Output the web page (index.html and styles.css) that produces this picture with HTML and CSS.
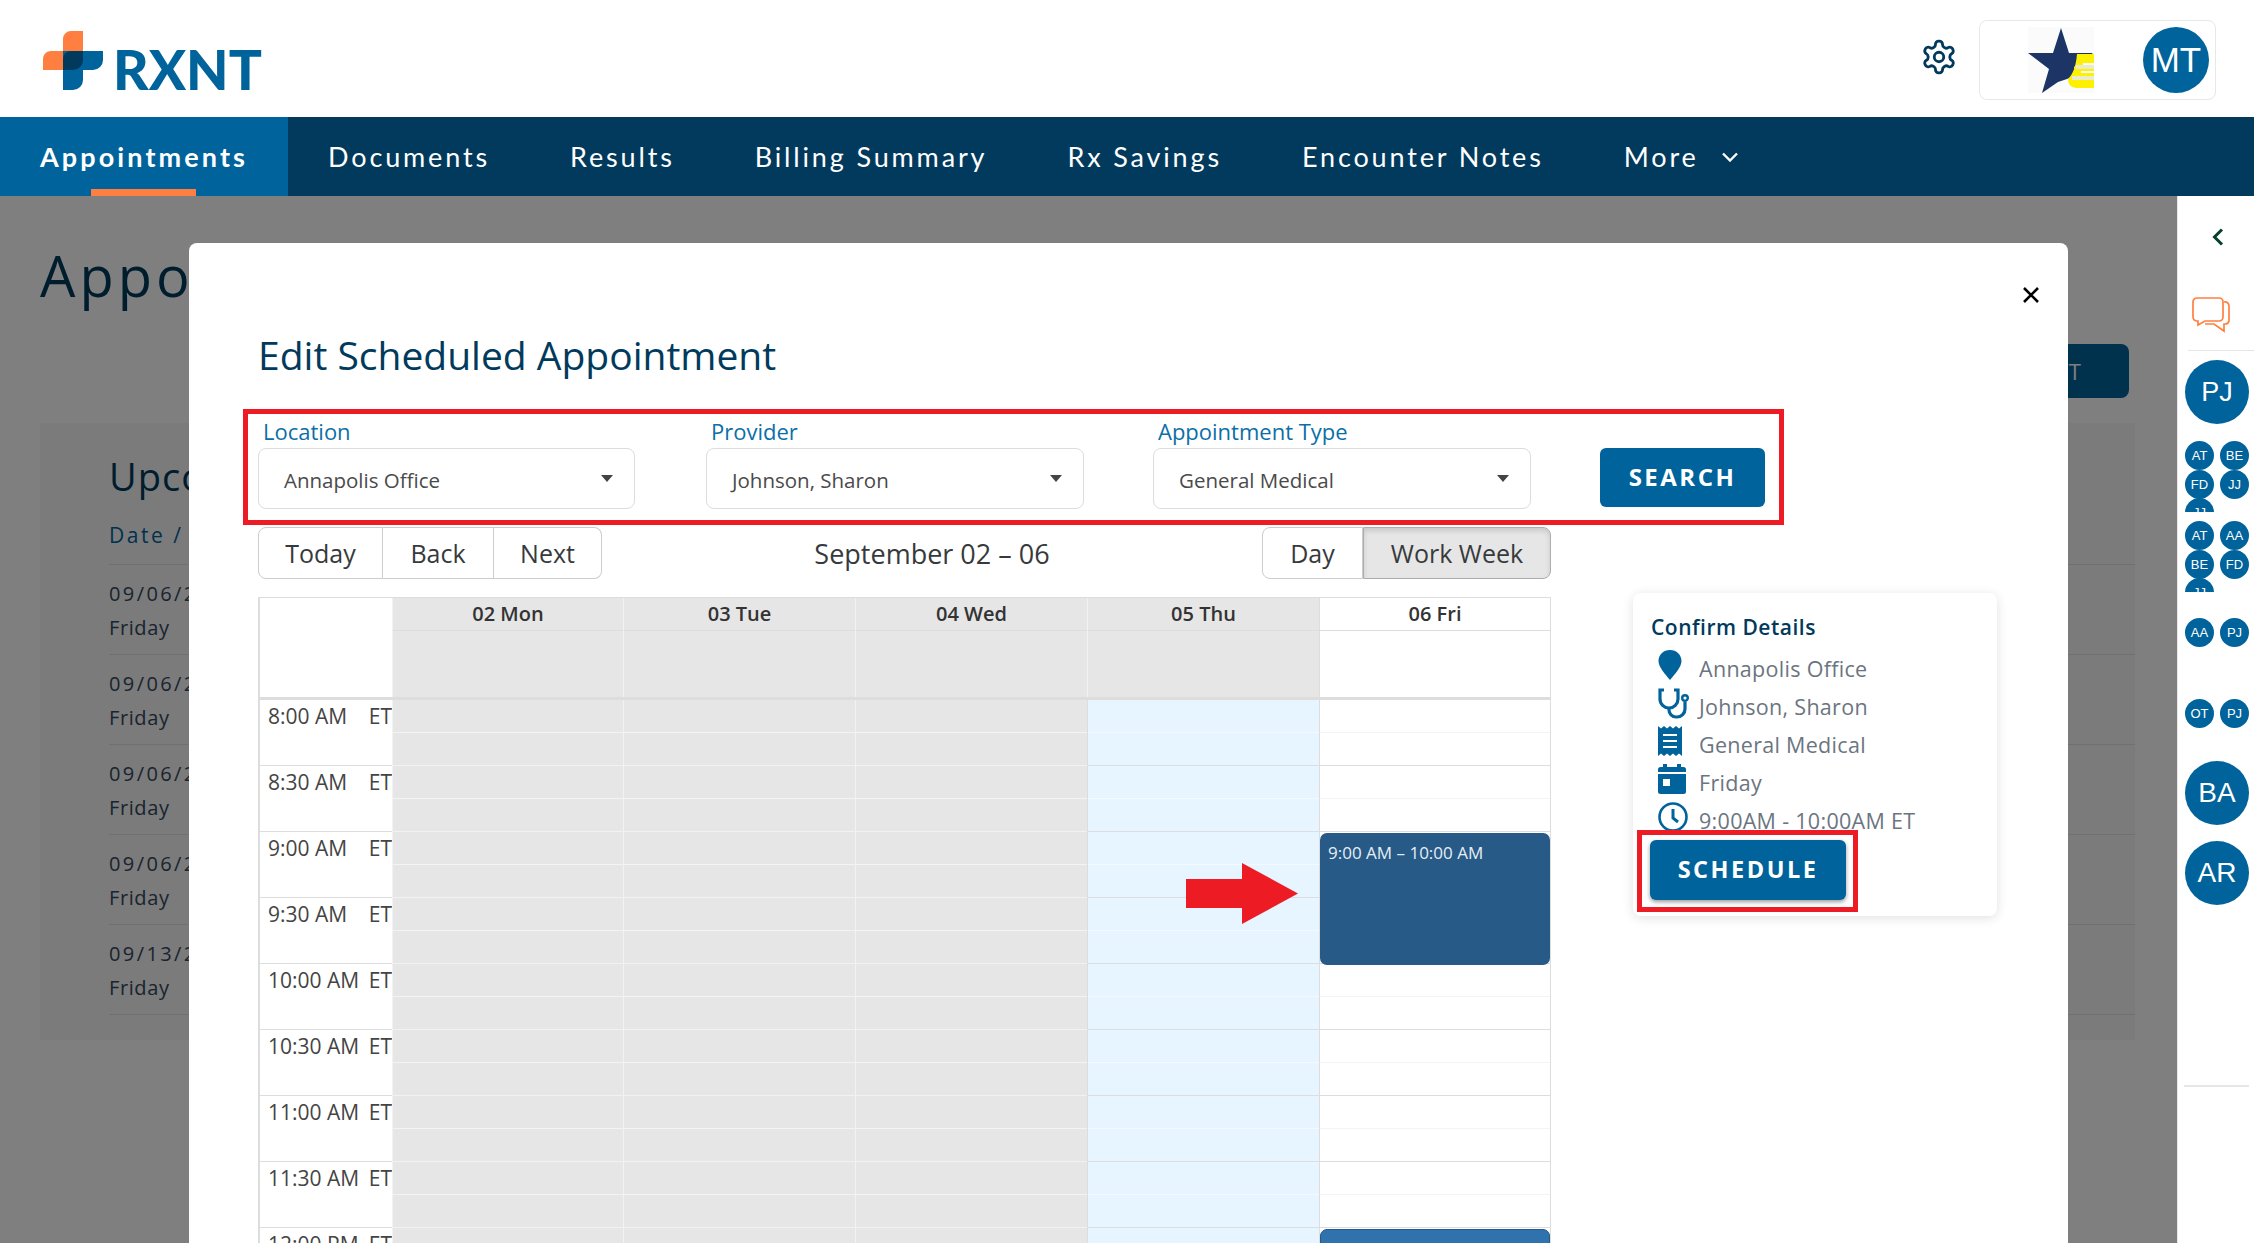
FILE: index.html
```html
<!DOCTYPE html>
<html lang="en">
<head>
    <meta charset="UTF-8">
    <meta name="viewport" content="width=device-width, initial-scale=1.0">
    <title>Edit Scheduled Appointment</title>
    <link rel="stylesheet" href="styles.css">
</head>
<body>

    <header class="topbar">
        <div class="logo">
            <svg class="logo-mark" width="60" height="59" viewBox="0 0 60 59">
                <path d="M28 0h12v29a10 10 0 0 1-10 10h-30v-11a8 8 0 0 1 8-8h12v-12a8 8 0 0 1 8-8z" fill="#ff7f41"/>
                <path d="M20 20h40v9a10 10 0 0 1-10 10h-10v10a10 10 0 0 1-10 10h-10z" fill="#00639b"/>
                <path d="M28 20h12v9a10 10 0 0 1-10 10h-10v-11a8 8 0 0 1 8-8z" fill="#013a5c"/>
            </svg>
            <span class="logo-text">RXNT</span>
        </div>
        <div class="topbar-right">
            <svg class="gear" width="38" height="38" viewBox="0 0 24 24" fill="none" stroke="#013a5c" stroke-width="1.800">
                <path d="M12.22 2h-.44a2 2 0 0 0-2 2v.18a2 2 0 0 1-1 1.73l-.43.25a2 2 0 0 1-2 0l-.15-.08a2 2 0 0 0-2.73.73l-.22.38a2 2 0 0 0 .73 2.73l.15.1a2 2 0 0 1 1 1.72v.51a2 2 0 0 1-1 1.74l-.15.09a2 2 0 0 0-.73 2.73l.22.38a2 2 0 0 0 2.73.73l.15-.08a2 2 0 0 1 2 0l.43.25a2 2 0 0 1 1 1.73V20a2 2 0 0 0 2 2h.44a2 2 0 0 0 2-2v-.18a2 2 0 0 1 1-1.73l.43-.25a2 2 0 0 1 2 0l.15.08a2 2 0 0 0 2.73-.73l.22-.39a2 2 0 0 0-.73-2.73l-.15-.08a2 2 0 0 1-1-1.74v-.5a2 2 0 0 1 1-1.74l.15-.09a2 2 0 0 0 .73-2.73l-.22-.38a2 2 0 0 0-2.73-.73l-.15.08a2 2 0 0 1-2 0l-.43-.25a2 2 0 0 1-1-1.73V4a2 2 0 0 0-2-2z"/>
                <circle cx="12" cy="12" r="3"/>
            </svg>
            <div class="account">
                <svg width="66" height="66" viewBox="0 0 66 66">
                    <rect width="66" height="66" fill="#fbfbfb"/>
                    <path d="M33 1l8 25h24l-19 14 2 8-9 4-9 3-16 11 7-24-21-16h25z" fill="#1c3566"/>
                    <path d="M49 27h17v9h-11v2h11v6h-13v2h13v15h-18a8 8 0 0 1-8-9c5-5 8-13 9-25z" fill="#fdf000"/>
                    <path d="M48 38h18v4h-18zM44 49h22v4h-22z" fill="#ecebc8"/>
                </svg>
                <span class="avatar avatar-mt">MT</span>
            </div>
        </div>
    </header>

    <nav class="mainnav">
        <a class="tab active">Appointments</a>
        <a class="tab">Documents</a>
        <a class="tab">Results</a>
        <a class="tab">Billing Summary</a>
        <a class="tab">Rx Savings</a>
        <a class="tab">Encounter Notes</a>
        <a class="tab">More
            <svg class="more-chevron" width="18" height="10" viewBox="0 0 18 10" fill="none" stroke="#fff" stroke-width="2.400"><path d="M2 1.500l7 7 7-7"/></svg>
        </a>
    </nav>

    <div class="workspace">
        <main class="page">
            <div class="page-head">
                <h1>Appointments</h1>
                <button class="new-btn">SCHEDULE APPOINTMENT</button>
            </div>
            <section class="upcoming">
                <h2>Upcoming Appointments</h2>
                <div class="upcoming-head">Date / Day</div>
                <div class="upcoming-row"><span class="date">09/06/2024</span><span>Friday</span></div>
                <div class="upcoming-row"><span class="date">09/06/2024</span><span>Friday</span></div>
                <div class="upcoming-row"><span class="date">09/06/2024</span><span>Friday</span></div>
                <div class="upcoming-row"><span class="date">09/06/2024</span><span>Friday</span></div>
                <div class="upcoming-row"><span class="date">09/13/2024</span><span>Friday</span></div>
            </section>

            <div class="overlay">
                <div class="modal">
                    <svg class="close" width="16" height="16" viewBox="0 0 16 16" stroke="#000" stroke-width="2.600"><path d="M1 1l14 14M15 1l-14 14"/></svg>
                    <h2 class="modal-title">Edit Scheduled Appointment</h2>

                    <div class="filters">
                        <div class="field loc">
                            <label>Location</label>
                            <div class="select">Annapolis Office<i class="caret"></i></div>
                        </div>
                        <div class="field prov">
                            <label>Provider</label>
                            <div class="select">Johnson, Sharon<i class="caret"></i></div>
                        </div>
                        <div class="field type">
                            <label>Appointment Type</label>
                            <div class="select">General Medical<i class="caret"></i></div>
                        </div>
                        <button class="search-btn">SEARCH</button>
                    </div>

                    <div class="modal-body">
                        <div class="calendar">
                            <div class="toolbar">
                                <div class="btn-group">
                                    <button class="today-btn">Today</button><button class="back-btn">Back</button><button class="next-btn">Next</button>
                                </div>
                                <span class="range">September 02 – 06</span>
                                <div class="btn-group">
                                    <button class="day-btn">Day</button><button class="pressed">Work Week</button>
                                </div>
                            </div>

                            <div class="grid">
                                <div class="grid-row head-row">
                                    <div class="time-cell"></div>
                                    <div class="closed"><b>02 Mon</b></div>
                                    <div class="closed"><b>03 Tue</b></div>
                                    <div class="closed"><b>04 Wed</b></div>
                                    <div class="closed"><b>05 Thu</b></div>
                                    <div><b>06 Fri</b></div>
                                </div>
                                <div class="grid-row slot"><div class="time-cell"><span>8:00 AM</span><span>ET</span></div><div class="closed"></div><div class="closed"></div><div class="closed"></div><div class="today"></div><div></div></div>
                                <div class="grid-row slot"><div class="time-cell"><span>8:30 AM</span><span>ET</span></div><div class="closed"></div><div class="closed"></div><div class="closed"></div><div class="today"></div><div></div></div>
                                <div class="grid-row slot"><div class="time-cell"><span>9:00 AM</span><span>ET</span></div><div class="closed"></div><div class="closed"></div><div class="closed"></div><div class="today"></div><div></div></div>
                                <div class="grid-row slot"><div class="time-cell"><span>9:30 AM</span><span>ET</span></div><div class="closed"></div><div class="closed"></div><div class="closed"></div><div class="today"></div><div></div></div>
                                <div class="grid-row slot"><div class="time-cell"><span>10:00 AM</span><span>ET</span></div><div class="closed"></div><div class="closed"></div><div class="closed"></div><div class="today"></div><div></div></div>
                                <div class="grid-row slot"><div class="time-cell"><span>10:30 AM</span><span>ET</span></div><div class="closed"></div><div class="closed"></div><div class="closed"></div><div class="today"></div><div></div></div>
                                <div class="grid-row slot"><div class="time-cell"><span>11:00 AM</span><span>ET</span></div><div class="closed"></div><div class="closed"></div><div class="closed"></div><div class="today"></div><div></div></div>
                                <div class="grid-row slot"><div class="time-cell"><span>11:30 AM</span><span>ET</span></div><div class="closed"></div><div class="closed"></div><div class="closed"></div><div class="today"></div><div></div></div>
                                <div class="grid-row slot"><div class="time-cell"><span>12:00 PM</span><span>ET</span></div><div class="closed"></div><div class="closed"></div><div class="closed"></div><div class="today"></div><div></div></div>

                                <div class="event event-selected">9:00 AM – 10:00 AM</div>
                                <div class="event event-next"></div>
                                <svg class="arrow" width="112" height="61" viewBox="0 0 112 61"><path d="M0 16h56v-16l56 30.500-56 30.500v-16h-56z" fill="#ed1c24"/></svg>
                            </div>
                        </div>

                        <aside class="confirm">
                            <h3>Confirm Details</h3>
                            <div class="confirm-row">
                                <svg width="24" height="30" viewBox="0 0 24 30"><path d="M12 0c6.600 0 11.500 4.800 11.500 11 0 6-6.500 13-11.500 19-5-6-11.500-13-11.500-19 0-6.200 4.900-11 11.500-11z" fill="#00639b"/></svg>
                                <span>Annapolis Office</span>
                            </div>
                            <div class="confirm-row">
                                <svg width="32" height="31" viewBox="0 0 32 31" fill="none" stroke="#00639b" stroke-width="3.200"><path d="M6 2h-4v9a9 9 0 0 0 18 0v-9h-4"/><path d="M11 20v2a7 7 0 0 0 7 7h1a8 8 0 0 0 8-8v-7"/><circle cx="27" cy="10" r="2.800" stroke-width="2.400"/></svg>
                                <span>Johnson, Sharon</span>
                            </div>
                            <div class="confirm-row">
                                <svg width="24" height="30" viewBox="0 0 24 30"><path d="M0 0l3 2.500 3-2.500 3 2.500 3-2.500 3 2.500 3-2.500 3 2.500 3-2.500v30l-3-2.500-3 2.500-3-2.500-3 2.500-3-2.500-3 2.500-3-2.500-3 2.500z" fill="#00639b"/><path d="M5 9h14M5 15h14M5 21h14" stroke="#fff" stroke-width="2"/></svg>
                                <span>General Medical</span>
                            </div>
                            <div class="confirm-row">
                                <svg width="28" height="30" viewBox="0 0 28 30"><rect y="3" width="28" height="27" rx="2.500" fill="#00639b"/><rect x="5" width="4" height="6" fill="#00639b"/><rect x="19" width="4" height="6" fill="#00639b"/><rect y="8" width="28" height="2" fill="#fff"/><rect x="5" y="15" width="7" height="7" fill="#fff"/></svg>
                                <span>Friday</span>
                            </div>
                            <div class="confirm-row">
                                <svg width="30" height="30" viewBox="0 0 30 30" fill="none" stroke="#00639b" stroke-width="2.600"><circle cx="15" cy="15" r="13.500"/><path d="M15 7v9l5 4" stroke-width="3"/></svg>
                                <span>9:00AM - 10:00AM ET</span>
                            </div>
                            <div class="schedule-mark">
                                <button class="schedule-btn">SCHEDULE</button>
                            </div>
                        </aside>
                    </div>
                </div>
            </div>
        </main>

        <aside class="side">
            <svg class="side-back" width="12" height="18" viewBox="0 0 12 18" fill="none" stroke="#063f2c" stroke-width="3"><path d="M10 1.500l-7.500 7.500 7.500 7.500"/></svg>
            <svg class="side-chat" width="38" height="36" viewBox="0 0 38 36" fill="none" stroke="#ff7f41" stroke-width="1.700">
                <path d="M5 1h22a4 4 0 0 1 4 4v15a4 4 0 0 1-4 4h-14l-7 4v-4h-1a4 4 0 0 1-4-4v-15a4 4 0 0 1 4-4z"/>
                <path d="M32 5a4 4 0 0 1 5 4v15a4 4 0 0 1-4 3h-1v7l-10-7h-9"/>
            </svg>
            <div class="side-divider"></div>
            <span class="avatar big first">PJ</span>
            <div class="mini-group g1"><span class="avatar mini">AT</span><span class="avatar mini">BE</span><span class="avatar mini">FD</span><span class="avatar mini">JJ</span><span class="avatar mini">JJ</span></div>
            <div class="mini-group g2"><span class="avatar mini">AT</span><span class="avatar mini">AA</span><span class="avatar mini">BE</span><span class="avatar mini">FD</span><span class="avatar mini">JJ</span></div>
            <div class="mini-group g3"><span class="avatar mini">AA</span><span class="avatar mini">PJ</span></div>
            <div class="mini-group g4"><span class="avatar mini">OT</span><span class="avatar mini">PJ</span></div>
            <span class="avatar big ba">BA</span>
            <span class="avatar big ar">AR</span>
            <div class="side-divider lower"></div>
        </aside>
    </div>

</body>
</html>
```

FILE: styles.css
```css
body {
    margin: 0;
    height: 1243px;
    overflow: hidden;
    font-family: "Open Sans", "Noto Sans", sans-serif;
    background: #fff;
}

button {
    font-family: inherit;
    cursor: pointer;
}

/* top bar */
.topbar {
    height: 117px;
    display: flex;
    justify-content: space-between;
    box-sizing: border-box;
    padding: 20px 38px 0 43px;
}

.logo {
    display: flex;
    align-items: flex-start;
    padding-top: 11px;
}

.logo-text {
    font-family: Lato, sans-serif;
    font-size: 55px;
    line-height: 59px;
    font-weight: 900;
    color: #00639b;
    margin: 9px 0 0 10px;
}

.topbar-right {
    display: flex;
    align-items: flex-start;
}

.gear {
    margin: 18px 21px 0 0;
}

.account {
    width: 237px;
    height: 80px;
    box-sizing: border-box;
    border: 1px solid #e8e8e8;
    border-radius: 8px;
    display: flex;
    align-items: center;
    padding-left: 48px;
}

.avatar {
    display: flex;
    align-items: center;
    justify-content: center;
    border-radius: 50%;
    background: #00639b;
    color: #fff;
    font-family: "Liberation Sans", Arial, sans-serif;
}

.avatar-mt {
    width: 66px;
    height: 66px;
    margin-left: 49px;
    font-size: 35px;
}

/* nav */
.mainnav {
    height: 79px;
    background: #013a5c;
    display: flex;
}

.tab {
    position: relative;
    padding: 0 40px;
    display: flex;
    align-items: center;
    color: #fff;
    font-family: Lato, sans-serif;
    font-size: 27px;
    letter-spacing: 2.850px;
    white-space: nowrap;
}

.tab.active {
    background: #00639b;
    font-weight: 700;
    letter-spacing: 3.100px;
}

.tab.active::after {
    content: "";
    position: absolute;
    left: 91px;
    bottom: 0;
    width: 105px;
    height: 7px;
    background: #ff7f41;
}

.more-chevron {
    margin-left: 22px;
}

/* page behind the modal */
.workspace {
    display: flex;
    height: 1047px;
}

.page {
    position: relative;
    flex: 1;
    overflow: hidden;
    background: #fff;
}

.page-head {
    display: flex;
    justify-content: space-between;
    padding: 40px 48px 0 40px;
    height: 227px;
    box-sizing: border-box;
}

.page-head h1 {
    margin: 0;
    font-size: 56px;
    line-height: 78px;
    font-weight: 400;
    color: #013a5c;
    letter-spacing: 4px;
}

.new-btn {
    height: 54px;
    margin-top: 108px;
    width: 340px;
    border: 0;
    border-radius: 8px;
    background: #00639b;
    color: #fff;
    font-size: 22px;
    text-align: right;
    padding-right: 48px;
}

.upcoming {
    margin: 0 42px 0 40px;
    height: 617px;
    background: #f6f6f6;
    padding: 30px 0 0 69px;
    box-sizing: border-box;
}

.upcoming h2 {
    margin: 0;
    font-size: 38px;
    line-height: 46px;
    font-weight: 400;
    color: #013a5c;
    letter-spacing: 1px;
}

.upcoming-head {
    font-size: 21px;
    letter-spacing: 2.500px;
    color: #00639b;
    margin-top: 22px;
    height: 43px;
    border-bottom: 1px solid #dde3e8;
}

.upcoming-row {
    height: 90px;
    border-bottom: 1px solid #dde3e8;
    display: flex;
    flex-direction: column;
    gap: 8px;
    padding-top: 16px;
    box-sizing: border-box;
    font-size: 20px;
    line-height: 26px;
    letter-spacing: 0.600px;
    color: #34495e;
}

.upcoming-row .date {
    letter-spacing: 2.400px;
}

.overlay {
    position: absolute;
    inset: 0;
    background: rgba(0, 0, 0, 0.5);
}

/* modal */
.modal {
    position: relative;
    margin: 47px 0 0 189px;
    width: 1879px;
    height: 1100px;
    box-sizing: border-box;
    padding: 89px 0 0 54px;
    background: #fff;
    border-radius: 8px;
}

.close {
    position: absolute;
    top: 44px;
    right: 29px;
}

.modal-title {
    margin: 0 0 31px 15px;
    font-size: 39px;
    line-height: 46px;
    font-weight: 400;
    color: #013a5c;
}

.filters {
    width: 1541px;
    height: 116px;
    box-sizing: border-box;
    border: 5px solid #ed1c24;
    padding: 5px 0 0 10px;
    display: flex;
    align-items: flex-start;
}

.field label {
    display: block;
    height: 24px;
    line-height: 24px;
    margin: 0 0 5px 5px;
    font-size: 22px;
    color: #0a6fa8;
}

.select {
    position: relative;
    box-sizing: border-box;
    height: 61px;
    border: 1px solid #ddd;
    border-radius: 8px;
    padding: 19px 0 0 25px;
    font-size: 20.500px;
    line-height: 24px;
    color: #4a4a4a;
}

.caret {
    position: absolute;
    right: 21px;
    top: 26px;
    border: 6px solid transparent;
    border-top: 7px solid #444;
    border-bottom: 0;
}

.loc .select { width: 377px; }
.prov { margin-left: 71px; }
.prov .select { width: 378px; }
.type { margin-left: 69px; }
.type .select { width: 378px; }

.search-btn {
    margin: 29px 0 0 69px;
    width: 165px;
    height: 59px;
    border: 0;
    border-radius: 6px;
    background: #00639b;
    color: #fff;
    font-size: 24px;
    font-weight: 700;
    letter-spacing: 2.500px;
    padding: 0 0 3px;
}

.modal-body {
    display: flex;
    align-items: flex-start;
    margin: 2px 0 0 15px;
}

/* calendar */
.calendar {
    width: 1293px;
}

.toolbar {
    display: flex;
    justify-content: space-between;
    align-items: center;
    height: 52px;
    margin-bottom: 18px;
}

.range {
    font-size: 27px;
    color: #373a3c;
}

.btn-group {
    display: flex;
    height: 52px;
}

.btn-group button {
    height: 52px;
    padding: 0;
    border: 1px solid #ccc;
    border-left-width: 0;
    background: #fff;
    font-size: 25px;
    color: #373a3c;
}

.btn-group button:first-child {
    border-left-width: 1px;
    border-radius: 8px 0 0 8px;
}

.btn-group button:last-child {
    border-radius: 0 8px 8px 0;
}

.today-btn { width: 125px; }
.back-btn { width: 111px; }
.next-btn { width: 108px; }

.btn-group .day-btn {
    width: 101px;
}

.btn-group .pressed {
    width: 188px;
    background: #e6e6e6;
    border-color: #adadad;
    border-left-width: 1px;
    box-shadow: inset 0 3px 5px rgba(0, 0, 0, 0.125);
}

.grid {
    position: relative;
    border: 1px solid #ddd;
    border-width: 1px 1px 0 2px;
    box-sizing: border-box;
    height: 650px;
    overflow: hidden;
}

.grid-row {
    display: grid;
    grid-template-columns: 132px 231px 232px 232px 232px 1fr;
}

.head-row {
    height: 99px;
    border-bottom: 3px solid #ddd;
}

.head-row > div {
    box-sizing: border-box;
    border-left: 1px solid #ddd;
    text-align: center;
    background-image: linear-gradient(#ddd, #ddd);
    background-repeat: no-repeat;
    background-size: 100% 1px;
    background-position: 0 32px;
}

.head-row > .time-cell {
    background-image: none;
    border-left: 0;
}

.head-row b {
    display: block;
    font-size: 20px;
    line-height: 32px;
    font-weight: 600;
    color: #333;
}

.slot {
    height: 66px;
}

.slot > div {
    box-sizing: border-box;
    border-left: 1px solid #ddd;
    border-bottom: 1px solid #ddd;
    background-image: linear-gradient(#f4f4f4, #f4f4f4);
    background-repeat: no-repeat;
    background-size: 100% 1px;
    background-position: 0 32px;
}

.slot > .time-cell {
    border-left: 0;
    background-image: none;
    display: flex;
    justify-content: space-between;
    padding: 3px 0 0 8px;
    font-size: 21px;
    line-height: 26px;
    color: #444;
}

.closed {
    background-color: #e6e6e6;
}

.slot .closed,
.head-row .closed {
    border-color: #f2f2f2;
}

.slot .closed {
    border-bottom-color: #f2f2f2;
}

.today {
    background-color: #e6f5ff;
}

.slot .today {
    background-image: linear-gradient(#f2f9ff, #f2f9ff);
}

.event {
    position: absolute;
    right: 0;
    width: 230px;
    box-sizing: border-box;
    border-radius: 7px;
    color: #e6eef5;
}

.event-selected {
    top: 235px;
    height: 132px;
    background: #275a87;
    padding: 9px 8px;
    font-size: 17px;
    line-height: 22px;
}

.event-next {
    top: 631px;
    height: 60px;
    background: #2f72ad;
    border: 1px solid #275a87;
}

.arrow {
    position: absolute;
    left: 926px;
    top: 265px;
}

/* confirm card */
.confirm {
    width: 364px;
    height: 323px;
    box-sizing: border-box;
    margin: 66px 0 0 82px;
    padding: 22px 0 0 4px;
    border-radius: 8px;
    background: #fff;
    box-shadow: 0 2px 12px rgba(0, 0, 0, 0.12);
}

.confirm h3 {
    margin: 0 0 10px 14px;
    font-size: 21px;
    line-height: 24px;
    font-weight: 600;
    color: #013a5c;
    letter-spacing: 0.500px;
}

.confirm-row {
    display: flex;
    align-items: center;
    height: 38px;
    margin-left: 21px;
    position: relative;
    padding-left: 41px;
    font-size: 21.500px;
    letter-spacing: 0.300px;
    color: #6b7580;
}

.confirm-row svg {
    position: absolute;
    left: 0;
    top: 1px;
}

.schedule-mark {
    position: relative;
    box-sizing: border-box;
    width: 221px;
    height: 82px;
    margin-top: -9px;
    padding: 5px 0 0 8px;
    border: 5px solid #ed1c24;
}

.schedule-btn {
    width: 196px;
    height: 60px;
    border: 0;
    border-radius: 6px;
    background: #00639b;
    color: #fff;
    font-size: 23.500px;
    font-weight: 700;
    letter-spacing: 2.500px;
    padding: 0 0 3px;
    box-shadow: 0 2px 4px rgba(0, 0, 0, 0.4);
}

/* right rail */
.side {
    width: 77px;
    box-sizing: border-box;
    border-left: 1px solid #e6e6e6;
    background: #fff;
    padding-left: 7px;
    position: relative;
    z-index: 2;
}

.side-back {
    display: block;
    margin: 32px 0 0 27px;
}

.side-chat {
    display: block;
    margin: 51px 0 0 7px;
}

.side-divider {
    height: 1px;
    margin: 17px 0 0 3px;
    background: #e6e6e6;
}

.side-divider.lower {
    width: 65px;
    height: 2px;
    margin: 180px 0 0 -1px;
}

.avatar.big {
    width: 64px;
    height: 64px;
    font-size: 28px;
}

.avatar.first {
    margin-top: 9px;
    font-size: 27px;
}

.mini-group {
    display: grid;
    grid-template-columns: 29px 29px;
    column-gap: 6px;
    grid-auto-rows: 28.500px;
    height: 71px;
    overflow: hidden;
}

.avatar.mini {
    width: 29px;
    height: 29px;
    font-size: 13px;
}

.g1 { margin-top: 17px; }
.g2 { margin-top: 9px; }
.g3 { margin-top: 26px; }
.g4 { margin-top: 10px; }

.avatar.ba { margin-top: -9px; }
.avatar.ar { margin-top: 16px; }
```
